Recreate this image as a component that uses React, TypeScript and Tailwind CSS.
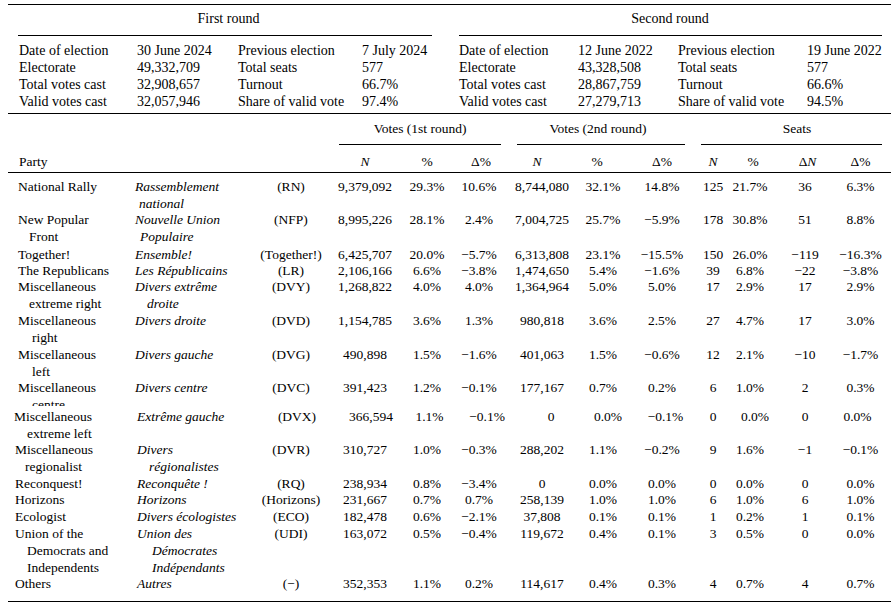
const summary = [
  {
    title: "First round",
    box: "pl-[11px]",
    rule: "ml-[10px] mr-[17px]",
    cols: "grid-cols-[118px_101px_124px_1fr]",
    cells: [
      ["Date of election", "30 June 2024", "Previous election", "7 July 2024"],
      ["Electorate", "49,332,709", "Total seats", "577"],
      ["Total votes cast", "32,908,657", "Turnout", "66.7%"],
      ["Valid votes cast", "32,057,946", "Share of valid vote", "97.4%"],
    ],
  },
  {
    title: "Second round",
    box: "pl-[10px]",
    rule: "ml-[10px] mr-[9px]",
    cols: "grid-cols-[119px_100px_129px_1fr]",
    cells: [
      ["Date of election", "12 June 2022", "Previous election", "19 June 2022"],
      ["Electorate", "43,328,508", "Total seats", "577"],
      ["Total votes cast", "28,867,759", "Turnout", "66.6%"],
      ["Valid votes cast", "27,279,713", "Share of valid vote", "94.5%"],
    ],
  },
]

type Line = [string, string]

type Row = {
  h: string
  en: Line[]
  fr: Line[]
  ab: string
  v: string[]
  clip?: boolean
  // nudges for the misaligned row (ab + 10 values)
  nudge?: string[]
}

const rows: Row[] = [
  {
    h: "h-[33px]",
    en: [["National Rally", "pl-[10px]"]],
    fr: [["Rassemblement", "pl-[4px]"], ["national", "pl-[8px]"]],
    ab: "(RN)",
    v: ["9,379,092", "29.3%", "10.6%", "8,744,080", "32.1%", "14.8%", "125", "21.7%", "36", "6.3%"],
  },
  {
    h: "h-[35px]",
    en: [["New Popular", "pl-[10px]"], ["Front", "pl-[21px]"]],
    fr: [["Nouvelle Union", "pl-[4px]"], ["Populaire", "pl-[9px]"]],
    ab: "(NFP)",
    v: ["8,995,226", "28.1%", "2.4%", "7,004,725", "25.7%", "−5.9%", "178", "30.8%", "51", "8.8%"],
  },
  {
    h: "h-[16px]",
    en: [["Together!", "pl-[10px]"]],
    fr: [["Ensemble!", "pl-[4px]"]],
    ab: "(Together!)",
    v: ["6,425,707", "20.0%", "−5.7%", "6,313,808", "23.1%", "−15.5%", "150", "26.0%", "−119", "−16.3%"],
  },
  {
    h: "h-[16px]",
    en: [["The Republicans", "pl-[10px]"]],
    fr: [["Les Républicains", "pl-[4px]"]],
    ab: "(LR)",
    v: ["2,106,166", "6.6%", "−3.8%", "1,474,650", "5.4%", "−1.6%", "39", "6.8%", "−22", "−3.8%"],
  },
  {
    h: "h-[34px]",
    en: [["Miscellaneous", "pl-[10px]"], ["extreme right", "pl-[21px]"]],
    fr: [["Divers extrême", "pl-[4px]"], ["droite", "pl-[16px]"]],
    ab: "(DVY)",
    v: ["1,268,822", "4.0%", "4.0%", "1,364,964", "5.0%", "5.0%", "17", "2.9%", "17", "2.9%"],
  },
  {
    h: "h-[34px]",
    en: [["Miscellaneous", "pl-[10px]"], ["right", "pl-[24px]"]],
    fr: [["Divers droite", "pl-[4px]"]],
    ab: "(DVD)",
    v: ["1,154,785", "3.6%", "1.3%", "980,818", "3.6%", "2.5%", "27", "4.7%", "17", "3.0%"],
  },
  {
    h: "h-[33px]",
    en: [["Miscellaneous", "pl-[10px]"], ["left", "pl-[24px]"]],
    fr: [["Divers gauche", "pl-[4px]"]],
    ab: "(DVG)",
    v: ["490,898", "1.5%", "−1.6%", "401,063", "1.5%", "−0.6%", "12", "2.1%", "−10", "−1.7%"],
  },
  {
    h: "h-[29px]",
    en: [["Miscellaneous", "pl-[10px]"], ["centre", "pl-[24px]"]],
    fr: [["Divers centre", "pl-[4px]"]],
    ab: "(DVC)",
    v: ["391,423", "1.2%", "−0.1%", "177,167", "0.7%", "0.2%", "6", "1.0%", "2", "0.3%"],
    clip: true,
  },
  {
    h: "h-[33px]",
    en: [["Miscellaneous", "pl-[6px]"], ["extreme left", "pl-[19px]"]],
    fr: [["Extrême gauche", "pl-[6px]"]],
    ab: "(DVX)",
    v: ["366,594", "1.1%", "−0.1%", "0", "0.0%", "−0.1%", "0", "0.0%", "0", "0.0%"],
    nudge: [
      "pl-[12px]",
      "pl-[12px]",
      "pl-[5px]",
      "pl-[16px]",
      "pl-[18px]",
      "pl-[10px]",
      "pl-[7px]",
      "",
      "pl-[10px]",
      "",
      "pr-[6px]",
    ],
  },
  {
    h: "h-[34px]",
    en: [["Miscellaneous", "pl-[7px]"], ["regionalist", "pl-[17px]"]],
    fr: [["Divers", "pl-[6px]"], ["régionalistes", "pl-[18px]"]],
    ab: "(DVR)",
    v: ["310,727", "1.0%", "−0.3%", "288,202", "1.1%", "−0.2%", "9", "1.6%", "−1", "−0.1%"],
  },
  {
    h: "h-[16px]",
    en: [["Reconquest!", "pl-[7px]"]],
    fr: [["Reconquête !", "pl-[6px]"]],
    ab: "(RQ)",
    v: ["238,934", "0.8%", "−3.4%", "0", "0.0%", "0.0%", "0", "0.0%", "0", "0.0%"],
  },
  {
    h: "h-[17px]",
    en: [["Horizons", "pl-[7px]"]],
    fr: [["Horizons", "pl-[6px]"]],
    ab: "(Horizons)",
    v: ["231,667", "0.7%", "0.7%", "258,139", "1.0%", "1.0%", "6", "1.0%", "6", "1.0%"],
  },
  {
    h: "h-[17px]",
    en: [["Ecologist", "pl-[7px]"]],
    fr: [["Divers écologistes", "pl-[6px]"]],
    ab: "(ECO)",
    v: ["182,478", "0.6%", "−2.1%", "37,808", "0.1%", "0.1%", "1", "0.2%", "1", "0.1%"],
  },
  {
    h: "h-[50px]",
    en: [["Union of the", "pl-[7px]"], ["Democrats and", "pl-[19px]"], ["Independents", "pl-[19px]"]],
    fr: [["Union des", "pl-[6px]"], ["Démocrates", "pl-[21px]"], ["Indépendants", "pl-[21px]"]],
    ab: "(UDI)",
    v: ["163,072", "0.5%", "−0.4%", "119,672", "0.4%", "0.1%", "3", "0.5%", "0", "0.0%"],
  },
  {
    h: "h-[26px]",
    en: [["Others", "pl-[7px]"]],
    fr: [["Autres", "pl-[6px]"]],
    ab: "(−)",
    v: ["352,353", "1.1%", "0.2%", "114,617", "0.4%", "0.3%", "4", "0.7%", "4", "0.7%"],
  },
]

const grid =
  "grid grid-cols-[123px_119px_82px_66px_58px_46px_80px_42px_76px_26px_48px_62px_49px_6px]"

function Cell({ children, className = "" }: { children: React.ReactNode; className?: string }) {
  return <div className={`flex justify-center whitespace-nowrap ${className}`}>{children}</div>
}

export default function App() {
  return (
    <div className="min-h-screen w-[895px] bg-white font-['Liberation_Serif',serif] text-black">
      <div className="ml-[8px] w-[883px] pt-[4px]">
        {/* summary boxes */}
        <div className="flex border-t border-black text-[14px] leading-[17px]">
          {summary.map((s, i) => (
            <div key={s.title} className={i === 0 ? "w-[441px]" : "flex-1"}>
              <div className="pt-[5px] text-center">{s.title}</div>
              <div className={`mt-[8px] border-t border-black ${s.rule}`} />
              <div className={`grid pt-[6px] pb-[3px] ${s.cols} ${s.box}`}>
                {s.cells.flat().map((c, j) => (
                  <div key={j} className="whitespace-nowrap">
                    {c}
                  </div>
                ))}
              </div>
            </div>
          ))}
        </div>

        {/* results table */}
        <div className="border-t border-black text-[13.5px] leading-[17px]">
          <div className={`${grid} pt-[6px]`}>
            <div className="col-span-3" />
            <div className="col-span-3 flex flex-col">
              <div className="pl-[6px] text-center whitespace-nowrap">Votes (1st round)</div>
              <div className="mt-[7px] ml-[7px] mr-[1px] border-t border-black" />
            </div>
            <div className="col-span-3 flex flex-col">
              <div className="pr-[6px] text-center whitespace-nowrap">Votes (2nd round)</div>
              <div className="mt-[7px] mx-[15px] border-t border-black" />
            </div>
            <div className="col-span-4 flex flex-col">
              <div className="pl-[9px] text-center">Seats</div>
              <div className="mt-[7px] ml-[1px] mr-[3px] border-t border-black" />
            </div>
          </div>

          <div className={`${grid} pt-[8px] pb-[2px]`}>
            <div className="col-span-3 pl-[11px]">Party</div>
            <Cell><i>N</i></Cell>
            <Cell>%</Cell>
            <Cell className="pl-[4px]">Δ%</Cell>
            <Cell className="pr-[10px]"><i>N</i></Cell>
            <Cell className="pr-[12px]">%</Cell>
            <Cell>Δ%</Cell>
            <Cell><i>N</i></Cell>
            <Cell className="pl-[6px]">%</Cell>
            <Cell className="pl-[5px]">Δ<i>N</i></Cell>
            <Cell>Δ%</Cell>
            <div />
          </div>

          <div className="border-t border-black pt-[5px]">
            {rows.map((r) => (
              <div key={r.ab} className={`${grid} ${r.h}`}>
                <div className={r.clip ? "h-[27px] overflow-hidden" : ""}>
                  {r.en.map(([t, p]) => (
                    <div key={t} className={`whitespace-nowrap ${p}`}>
                      {t}
                    </div>
                  ))}
                </div>
                <div className="italic">
                  {r.fr.map(([t, p]) => (
                    <div key={t} className={`whitespace-nowrap ${p}`}>
                      {t}
                    </div>
                  ))}
                </div>
                <Cell className={r.nudge?.[0] ?? ""}>{r.ab}</Cell>
                {r.v.map((v, k) => (
                  <Cell key={k} className={r.nudge?.[k + 1] ?? ""}>
                    {v}
                  </Cell>
                ))}
                <div />
              </div>
            ))}
          </div>
          <div className="border-t border-black" />
        </div>
      </div>
    </div>
  )
}
